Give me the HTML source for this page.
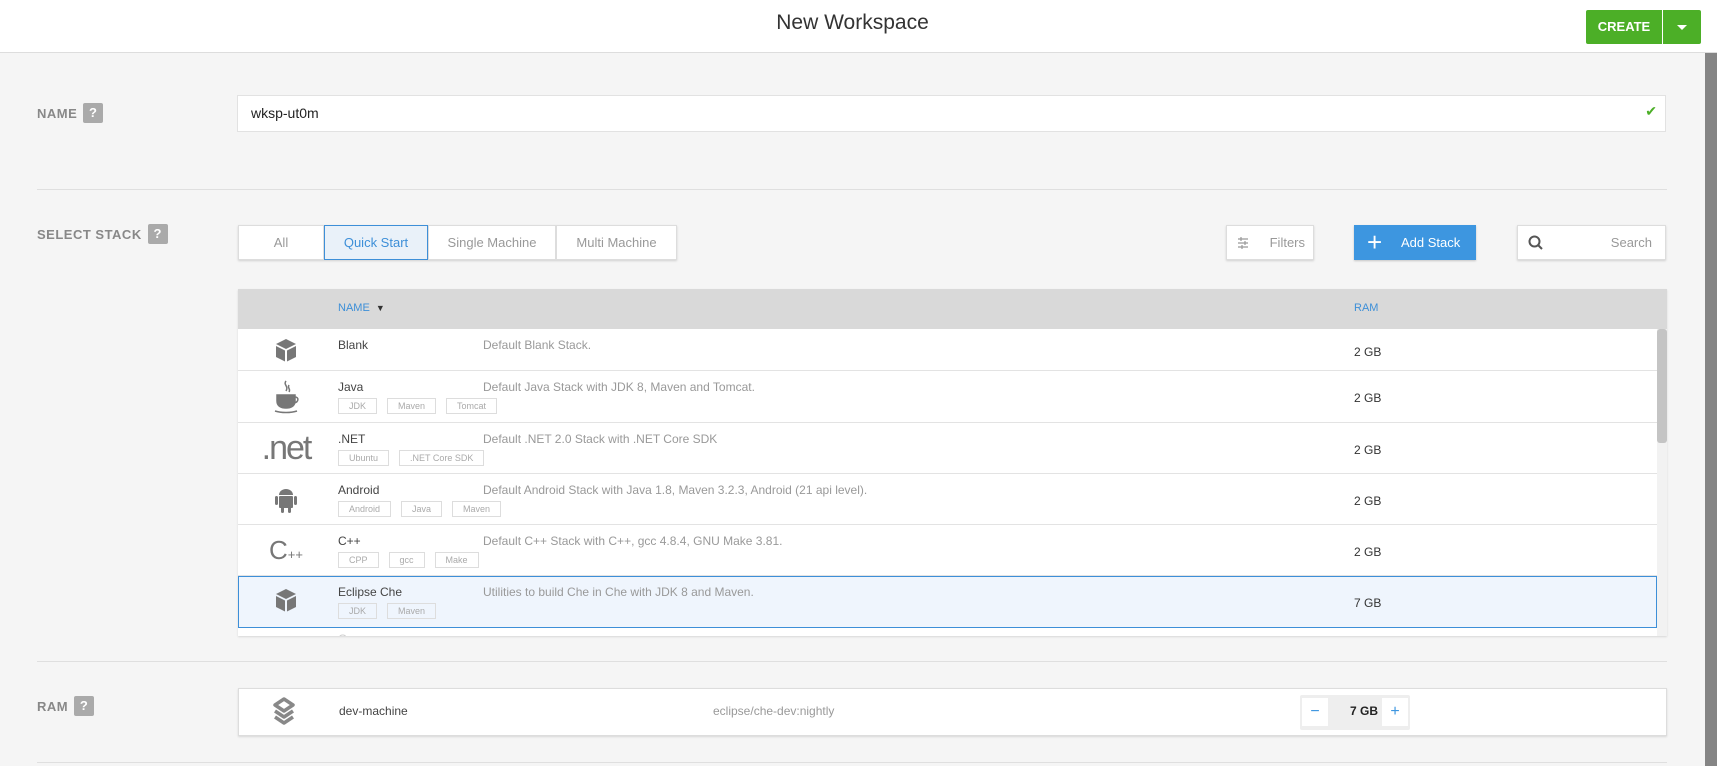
<!DOCTYPE html>
<html><head><meta charset="utf-8"><style>
*{box-sizing:border-box;margin:0;padding:0}
body{width:1717px;height:766px;overflow:hidden;background:#f5f5f5;font-family:"Liberation Sans",sans-serif;color:#444;position:relative}
.abs{position:absolute}
.hdr{left:0;top:0;width:1717px;height:53px;background:#fff;border-bottom:1px solid #ddd}
.title{left:0;width:1705px;top:11px;text-align:center;font-size:21px;color:#333}
.create{left:1586px;top:10px;width:76px;height:34px;background:#4caf27;color:#fff;font-weight:bold;font-size:13px;line-height:34px;text-align:center;border-radius:2px 0 0 2px}
.dd{left:1663px;top:10px;width:38px;height:34px;background:#4caf27;border-radius:0 2px 2px 0}
.dd:after{content:"";position:absolute;left:14px;top:15px;border-left:5px solid transparent;border-right:5px solid transparent;border-top:5px solid #fff}
.sb{left:1705px;top:53px;width:12px;height:713px;background:#858585}
.lbl{font-size:13px;color:#888;letter-spacing:.5px;display:flex;align-items:center;font-weight:bold}
.q{display:inline-block;width:20px;height:20px;background:#aaa;color:#fff;border-radius:2px;text-align:center;line-height:20px;font-weight:bold;font-size:13px;margin-left:6px}
.input{left:237px;top:95px;width:1429px;height:37px;background:#fff;border:1px solid #e2e2e2;font-size:14px;color:#222;padding:9px 13px}
.hr{left:37px;width:1630px;height:1px;background:#dfdfdf}
.tabs{left:238px;top:225px;height:35px;display:flex;box-shadow:0 1px 2px rgba(0,0,0,.15)}
.tab{background:#fff;border:1px solid #ddd;font-size:13px;color:#999;text-align:center;line-height:33px}
.btn{background:#fff;border:1px solid #ddd;height:35px;box-shadow:0 1px 2px rgba(0,0,0,.15);font-size:13px;color:#999;line-height:33px}
.tbl{left:238px;top:289px;width:1429px;height:347px;background:#fff;overflow:hidden;box-shadow:0 1px 2px rgba(0,0,0,.12)}
.th{height:40px;background:#d9d9d9;position:relative}
.row{position:relative;border-bottom:1px solid #e3e3e3;width:1419px}
.nm{position:absolute;left:100px;top:9px;font-size:12px;color:#444}
.ds{position:absolute;left:245px;top:9px;font-size:12px;color:#999}
.ram{position:absolute;left:1116px;font-size:12px;color:#333}
.tags{position:absolute;left:100px;top:27px;display:flex;gap:10px}
.tag{border:1px solid #ddd;font-size:9px;color:#aaa;padding:2px 10px;height:16px;line-height:11px}
.ic{position:absolute;left:28px;width:40px;text-align:center;color:#777}
</style></head><body>
<div class="abs hdr"></div>
<div class="abs title">New Workspace</div>
<div class="abs create">CREATE</div>
<div class="abs dd"></div>
<div class="abs sb"></div>

<div class="abs lbl" style="left:37px;top:103px">NAME<span class="q">?</span></div>
<div class="abs input">wksp-ut0m<span style="position:absolute;right:8px;top:7px;color:#4caf27;font-size:14px">✔</span></div>
<div class="abs hr" style="top:189px"></div>

<div class="abs lbl" style="left:37px;top:224px">SELECT STACK<span class="q">?</span></div>
<div class="abs tabs">
<div class="tab" style="width:86px">All</div>
<div class="tab" style="width:104px;background:#e9f1f9;border-color:#3d8fd8;color:#3d8fd8">Quick Start</div>
<div class="tab" style="width:128px">Single Machine</div>
<div class="tab" style="width:121px">Multi Machine</div>
</div>
<div class="abs btn" style="left:1226px;top:225px;width:88px"><svg class="abs" style="left:10px;top:11px" width="12" height="12" viewBox="0 0 12 12" stroke="#999" stroke-width="1.2"><path d="M1 2h10M1 6h10M1 10h10"/><path d="M4 0v4M8 4v4M5 8v4"/></svg><span style="position:absolute;right:8px">Filters</span></div>
<div class="abs" style="left:1354px;top:225px;width:122px;height:35px;background:#3d96e0;color:#fff;font-size:13px;line-height:35px;box-shadow:0 1px 2px rgba(0,0,0,.2)"><span style="position:absolute;left:13px;top:0;font-size:26px;font-weight:300">+</span><span style="position:absolute;left:47px">Add Stack</span></div>
<div class="abs btn" style="left:1517px;top:225px;width:149px"><svg class="abs" style="left:10px;top:9px" width="16" height="16" viewBox="0 0 16 16" stroke="#555" stroke-width="2" fill="none"><circle cx="6.5" cy="6.5" r="5"/><path d="M10 10l4 4"/></svg><span style="position:absolute;right:13px">Search</span></div>

<div class="abs tbl">
<div class="th"><span style="position:absolute;left:100px;top:13px;font-size:11px;color:#3d8fd8">NAME &nbsp;<span style="color:#333;font-size:9px">▼</span></span><span style="position:absolute;left:1116px;top:13px;font-size:11px;color:#3d8fd8">RAM</span></div>
<div class="row" style="height:42px"><svg class="ic" style="top:9px" width="40" height="24" viewBox="0 0 40 24"><path d="M20 1l10 5-10 5-10-5z M10 8l9 4.5v11l-9-4.5z M21 12.5l9-4.5v11l-9 4.5z" fill="#777"/></svg><div class="nm">Blank</div><div class="ds">Default Blank Stack.</div><div class="ram" style="top:16px">2 GB</div></div>
<div class="row" style="height:52px"><svg class="ic" style="top:8px" width="40" height="36" viewBox="0 0 40 36" fill="none" stroke="#777" stroke-width="1.5"><path d="M20 2c-3 4 3 5 0 10M23 6c-2 3 2 4 0 7"/><path d="M11 16h18v6c0 5-4 7-9 7s-9-2-9-7z" fill="#777"/><path d="M29 18c4 0 4 5-1 6"/><path d="M9 32c6 2 16 2 22 0"/></svg><div class="nm">Java</div><div class="ds">Default Java Stack with JDK 8, Maven and Tomcat.</div><div class="tags"><span class="tag">JDK</span><span class="tag">Maven</span><span class="tag">Tomcat</span></div><div class="ram" style="top:20px">2 GB</div></div>
<div class="row" style="height:51px"><div class="ic" style="left:18px;width:60px;top:6px;font-size:34px;letter-spacing:-2px">.net</div><div class="nm">.NET</div><div class="ds">Default .NET 2.0 Stack with .NET Core SDK</div><div class="tags"><span class="tag">Ubuntu</span><span class="tag">.NET Core SDK</span></div><div class="ram" style="top:20px">2 GB</div></div>
<div class="row" style="height:51px"><svg class="ic" style="top:12px" width="40" height="28" viewBox="0 0 40 28" fill="#777"><path d="M13 9a7 6 0 0 1 14 0z"/><rect x="13" y="10" width="14" height="12" rx="1"/><rect x="9" y="10" width="3" height="9" rx="1.5"/><rect x="28" y="10" width="3" height="9" rx="1.5"/><rect x="15" y="21" width="3" height="6" rx="1.5"/><rect x="22" y="21" width="3" height="6" rx="1.5"/></svg><div class="nm">Android</div><div class="ds">Default Android Stack with Java 1.8, Maven 3.2.3, Android (21 api level).</div><div class="tags"><span class="tag">Android</span><span class="tag">Java</span><span class="tag">Maven</span></div><div class="ram" style="top:20px">2 GB</div></div>
<div class="row" style="height:51px"><div class="ic" style="top:10px;font-size:26px">C<span style="font-size:13px">++</span></div><div class="nm">C++</div><div class="ds">Default C++ Stack with C++, gcc 4.8.4, GNU Make 3.81.</div><div class="tags"><span class="tag">CPP</span><span class="tag">gcc</span><span class="tag">Make</span></div><div class="ram" style="top:20px">2 GB</div></div>
<div class="row" style="height:52px;background:#eff5fd;border:1px solid #3d8fd8"><svg class="ic" style="top:11px;left:27px" width="40" height="24" viewBox="0 0 40 24"><path d="M20 1l10 5-10 5-10-5z M10 8l9 4.5v11l-9-4.5z M21 12.5l9-4.5v11l-9 4.5z" fill="#777"/></svg><div class="nm" style="left:99px;top:8px">Eclipse Che</div><div class="ds" style="left:244px;top:8px">Utilities to build Che in Che with JDK 8 and Maven.</div><div class="tags" style="left:99px;top:26px"><span class="tag">JDK</span><span class="tag">Maven</span></div><div class="ram" style="top:19px;left:1115px">7 GB</div></div>
<div class="row" style="height:20px"><div class="nm" style="top:4px;color:#ccc">Go</div></div>
<div class="abs" style="left:1419px;top:40px;width:10px;height:307px;background:#f2f2f2"><div style="margin-top:0;height:114px;background:#c4c4c4;border-radius:3px"></div></div>
</div>
<div class="abs hr" style="top:661px"></div>

<div class="abs lbl" style="left:37px;top:696px">RAM<span class="q">?</span></div>
<div class="abs" style="left:238px;top:688px;width:1429px;height:48px;background:#fff;border:1px solid #ddd;box-shadow:0 1px 2px rgba(0,0,0,.12)">
<svg class="abs" style="left:32px;top:7px" width="26" height="32" viewBox="0 0 26 32" fill="none" stroke="#888" stroke-width="3.5" stroke-linejoin="round"><path d="M13 3l9 6-9 6-9-6z"/><path d="M4 15l9 6 9-6"/><path d="M4 21l9 6 9-6"/></svg>
<span class="abs" style="left:100px;top:15px;font-size:12px;color:#444">dev-machine</span>
<span class="abs" style="left:474px;top:15px;font-size:12px;color:#999">eclipse/che-dev:nightly</span>
<div class="abs" style="left:1061px;top:6px;width:110px;height:35px;background:#eee;border-radius:2px">
<div class="abs" style="left:2px;top:3px;width:26px;height:28px;background:#fff;color:#3d96e0;text-align:center;line-height:28px;font-size:16px">−</div>
<span class="abs" style="left:50px;top:9px;font-size:12px;font-weight:bold;color:#222">7 GB</span>
<div class="abs" style="left:82px;top:3px;width:26px;height:28px;background:#fff;color:#3d96e0;text-align:center;line-height:28px;font-size:16px">+</div>
</div></div>
<div class="abs hr" style="top:762px"></div>
</body></html>
